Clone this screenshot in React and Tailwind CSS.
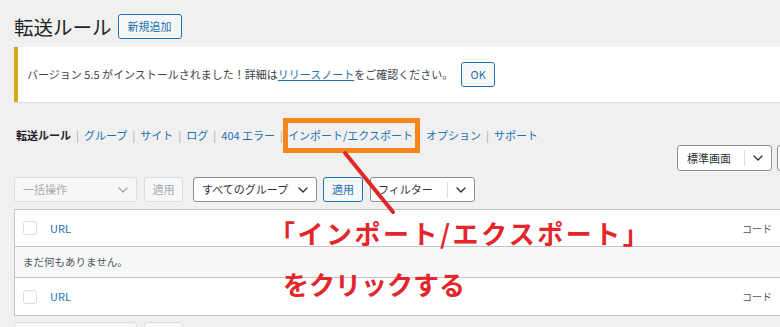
import React from "react";

const Chevron = ({ color = "#2c3338" }) => (
  <svg width="10" height="6" viewBox="0 0 10 6" fill="none">
    <polyline points="1,1 5,5 9,1" stroke={color} strokeWidth="1.4" strokeLinecap="round" strokeLinejoin="round" />
  </svg>
);

const Sep = () => <span className="text-[#a7aaad] mx-[5px]">|</span>;

const Checkbox = () => (
  <div className="w-[14px] h-[14px] border border-[#dcdcde] rounded-[3px] bg-white" />
);

export default function App() {
  return (
    <div
      className="relative w-[780px] h-[327px] overflow-hidden bg-[#f0f0f1] text-[#3c434a]"
      style={{ fontFamily: '"Noto Sans CJK JP", "Noto Sans", sans-serif' }}
    >
      <div className="ml-[14px] w-[833px] pt-[14px]">
        {/* Title */}
        <div className="flex items-center h-[25px]">
          <h1 className="text-[19.5px] leading-none text-[#1d2327] font-normal">転送ルール</h1>
          <button className="ml-[6px] h-[25px] px-[9px] border border-[#2271b1] rounded-[3px] bg-[#f6f7f7] text-[#2271b1] text-[11px] leading-none">
            新規追加
          </button>
        </div>

        {/* Notice */}
        <div className="mt-[8px] h-[55px] bg-white border-l-4 border-[#dba617] shadow-[0_1px_1px_rgba(0,0,0,0.06)] flex items-center pl-[9px]">
          <span className="text-[11px] text-[#3c434a]">
            バージョン 5.5 がインストールされました！詳細は
            <span className="text-[#2271b1] underline">リリースノート</span>
            をご確認ください。
          </span>
          <button className="ml-[8px] w-[34px] h-[25px] border border-[#2271b1] rounded-[3px] bg-[#f6f7f7] text-[#2271b1] text-[11px] leading-none">
            OK
          </button>
        </div>

        {/* Nav */}
        <div className="mt-[25px] ml-[2px] h-[16px] flex items-center text-[11px] leading-none">
          <span className="font-bold text-[#1d2327]">転送ルール</span>
          <Sep />
          <span className="text-[#2271b1]">グループ</span>
          <Sep />
          <span className="text-[#2271b1]">サイト</span>
          <Sep />
          <span className="text-[#2271b1]">ログ</span>
          <Sep />
          <span className="text-[#2271b1]">404 エラー</span>
          <Sep />
          <span className="text-[#2271b1]">インポート/エクスポート</span>
          <Sep />
          <span className="text-[#2271b1]">オプション</span>
          <Sep />
          <span className="text-[#2271b1]">サポート</span>
        </div>

        {/* Display select row */}
        <div className="mt-[2px] flex justify-end gap-[5px]">
          <div className="w-[95px] h-[26px] bg-white border border-[#8c8f94] rounded-[3px] flex items-center text-[11px] text-[#2c3338]">
            <span className="pl-[9px] flex-1">標準画面</span>
            <div className="w-px h-[16px] bg-[#dcdcde]" />
            <div className="w-[26px] flex justify-center">
              <Chevron />
            </div>
          </div>
          <div className="w-[70px] h-[26px] bg-white border border-[#8c8f94] rounded-[3px]" />
        </div>

        {/* Tablenav top */}
        <div className="mt-[6px] h-[25px] flex items-center text-[11px]">
          <div className="w-[123px] h-[25px] border border-[#dcdcde] rounded-[3px] bg-[#f6f7f7] flex items-center justify-between px-[8px] text-[#a7aaad]">
            <span>一括操作</span>
            <Chevron color="#a7aaad" />
          </div>
          <div className="ml-[7px] w-[39px] h-[25px] border border-[#dcdcde] rounded-[3px] bg-[#f6f7f7] flex items-center justify-center text-[#a7aaad]">
            適用
          </div>
          <div className="ml-[10px] w-[124px] h-[25px] border border-[#8c8f94] rounded-[3px] bg-white flex items-center justify-between px-[8px] text-[#2c3338]">
            <span>すべてのグループ</span>
            <Chevron />
          </div>
          <div className="ml-[6px] w-[40px] h-[25px] border border-[#2271b1] rounded-[3px] bg-[#f6f7f7] flex items-center justify-center text-[#2271b1]">
            適用
          </div>
          <div className="ml-[7px] w-[105px] h-[25px] border border-[#8c8f94] rounded-[3px] bg-white flex items-center text-[#2c3338]">
            <span className="pl-[7px] flex-1">フィルター</span>
            <div className="w-px h-[16px] bg-[#dcdcde]" />
            <div className="w-[26px] flex justify-center">
              <Chevron />
            </div>
          </div>
        </div>

        {/* Table */}
        <div className="mt-[7px] border border-[#c3c4c7] bg-white">
          <div className="h-[37px] flex items-center border-b border-[#c3c4c7]">
            <div className="w-[35px] pl-[8px]">
              <Checkbox />
            </div>
            <span className="flex-1 text-[11px] text-[#2271b1]">URL</span>
            <span className="w-[104px] text-[10px] text-[#50575e]">コード</span>
          </div>
          <div className="h-[31px] flex items-center border-b border-[#c3c4c7] bg-[#f6f7f7] pl-[8px] text-[10.5px] text-[#50575e]">
            まだ何もありません。
          </div>
          <div className="h-[37px] flex items-center">
            <div className="w-[35px] pl-[8px]">
              <Checkbox />
            </div>
            <span className="flex-1 text-[11px] text-[#2271b1]">URL</span>
            <span className="w-[104px] text-[10px] text-[#50575e]">コード</span>
          </div>
        </div>

        {/* Tablenav bottom */}
        <div className="mt-[6px] h-[25px] flex items-center text-[11px]">
          <div className="w-[123px] h-[25px] border border-[#dcdcde] rounded-[3px] bg-[#f6f7f7]" />
          <div className="ml-[7px] w-[39px] h-[25px] border border-[#dcdcde] rounded-[3px] bg-[#f6f7f7]" />
        </div>
      </div>

      {/* Annotations */}
      <div className="absolute left-[283px] top-[118px] w-[137px] h-[35px] border-[5px] border-[#f7851e]" />
      <svg className="absolute left-0 top-0" width="780" height="327">
        <line x1="345" y1="153" x2="393" y2="212" stroke="#e3262b" strokeWidth="4" strokeLinecap="round" />
      </svg>
      <div className="absolute left-[283px] top-[209px] text-[26px] font-bold text-[#e3262b] whitespace-nowrap">
        <div className="ml-[-14px] leading-[48px] tracking-[2.5px]">「インポート/エクスポート」</div>
        <div className="mt-[3px] leading-[48px]">をクリックする</div>
      </div>
    </div>
  );
}
